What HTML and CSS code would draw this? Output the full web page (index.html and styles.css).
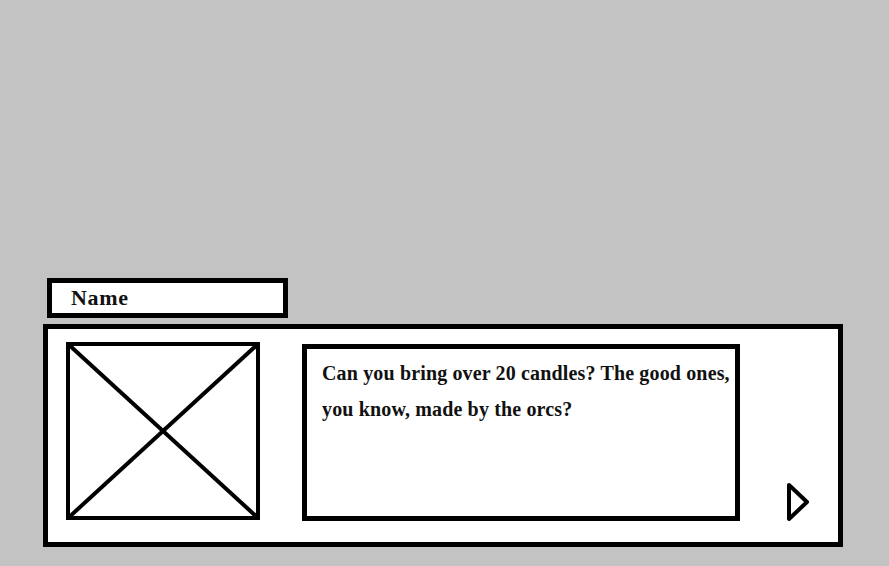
FILE: index.html
```html
<!DOCTYPE html>
<html lang="en">
<head>
    <meta charset="UTF-8">
    <meta name="viewport" content="width=device-width, initial-scale=1.0">
    <title>Dialogue</title>
    <link rel="stylesheet" href="styles.css">
</head>
<body>
    <div class="dialog">
        <div class="name-tag">Name</div>
        <div class="dialog-box">
            <svg class="portrait" width="194" height="178" viewBox="0 0 194 178">
                <rect x="2" y="2" width="190" height="174" fill="#fff" stroke="#000" stroke-width="4"/>
                <line x1="2" y1="2" x2="192" y2="176" stroke="#000" stroke-width="4"/>
                <line x1="192" y1="2" x2="1" y2="177" stroke="#000" stroke-width="4"/>
            </svg>
            <div class="speech">Can you bring over 20 candles? The good ones, you know, made by the orcs?</div>
            <svg class="next-arrow" width="26" height="40" viewBox="0 0 26 40">
                <path d="M4 3 L22 20 L4 37 Z" fill="none" stroke="#000" stroke-width="4" stroke-linejoin="round"/>
            </svg>
        </div>
    </div>
</body>
</html>
```

FILE: styles.css
```css
body { margin: 0; padding: 0; height: 566px; background-color: #c3c3c3; font-family: "Liberation Serif", "Times New Roman", serif; color: #111; overflow: hidden; }
.dialog { padding: 278px 0 0 43px; display: flex; flex-direction: column; gap: 6px; }
.name-tag { margin-left: 4px; width: 241px; height: 40px; box-sizing: border-box; border: 5px solid #000; background-color: #fff; padding-left: 19px; font-size: 22px; font-weight: bold; line-height: 30px; letter-spacing: 0.7px; }
.dialog-box { width: 800px; height: 223px; box-sizing: border-box; border: 5px solid #000; background-color: #fff; display: flex; align-items: flex-start; padding: 13px 0 0 18px; }
.portrait { display: block; flex-shrink: 0; }
.speech { margin: 2px 0 0 42px; width: 438px; height: 177px; box-sizing: border-box; border: 5px solid #000; padding: 6px 0 0 15px; font-size: 20px; font-weight: bold; line-height: 36px; letter-spacing: 0.15px; }
.next-arrow { display: block; margin: 0 0 20px 45px; align-self: flex-end; }
```
